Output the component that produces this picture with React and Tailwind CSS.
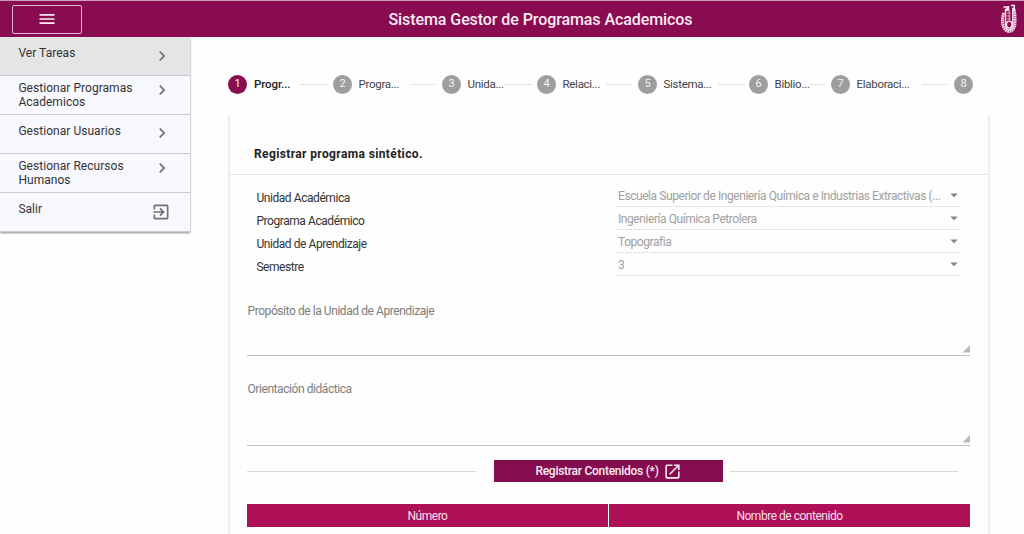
import React from 'react';
import { MdMenu, MdChevronRight, MdExitToApp, MdOpenInNew, MdArrowDropDown } from 'react-icons/md';

const menu = [
  { label: 'Ver Tareas', item: 'bg-[#e5e5e5] pt-[9px]', icon: '' },
  { label: 'Gestionar Programas Academicos', item: 'pt-[5px]', icon: '-mt-px' },
  { label: 'Gestionar Usuarios', item: 'pt-[9px]', icon: '-mt-px' },
  { label: 'Gestionar Recursos Humanos', item: 'pt-[5px]', icon: '-mt-px' },
  { label: 'Salir', item: 'pt-[9px]', icon: '-ml-px', exit: true },
];

const steps = [
  { label: 'Progr...', width: 'w-[105px]', text: 'w-[46px]', line: 'w-[27px]', active: true },
  { label: 'Progra...', width: 'w-[109px]', text: 'w-[52px]', line: 'w-[24px]' },
  { label: 'Unida...', width: 'w-[95px]', text: 'w-[37px]', line: 'w-[27px]' },
  { label: 'Relaci...', width: 'w-[101px]', text: 'w-[43px]', line: 'w-[26px]' },
  { label: 'Sistema...', width: 'w-[111px]', text: 'w-[54px]', line: 'w-[27px]' },
  { label: 'Biblio...', width: 'w-[82px]', text: 'w-[35px]', line: 'w-[15px]' },
  { label: 'Elaboraci...', width: 'w-[123px]', text: 'w-[65px]', line: 'w-[25px]' },
  { label: '', width: 'w-[20px]' },
];

const fields = [
  ['Unidad Académica', 'Escuela Superior de Ingeniería Química e Industrias Extractivas (...'],
  ['Programa Académico', 'Ingeniería Química Petrolera'],
  ['Unidad de Aprendizaje', 'Topografia'],
  ['Semestre', '3'],
];

function Crest() {
  return (
    <svg viewBox="0 0 18 30" className="h-[30px] w-[18px]" fill="none">
      <path d="M3.6 9C2.2 14 2 19 3.6 23c1.4 3 3.2 4.4 5.4 4.4 3.4 0 5.6-3.4 5.9-7.4.3-4 .2-10-1-15" stroke="#f7dcea" strokeWidth="3" strokeDasharray="1.7 .5" />
      <path d="M5.5 5v15c0 3.6 1.6 5.6 3.7 5.6s3.6-2 3.6-5.6V4" stroke="#f6dbe9" strokeWidth="1.5" />
      <path d="M3.4 3h3.2v4M8.4 2v5M11 1.5h3.2V7" stroke="#fbe6f1" strokeWidth="1.7" />
      <path d="M9.2 6v10M7 9h4M7 12h4M7 15h4" stroke="#dc96bb" strokeWidth="1.2" />
      <ellipse cx="9.2" cy="20.5" rx="2.7" ry="3.4" stroke="#fbe9f3" strokeWidth="1.3" />
    </svg>
  );
}

function TextArea({ label, className }) {
  return (
    <div className={`flex justify-between border-b border-[#bdbdbd] text-[12px] leading-4 tracking-[-0.43px] text-[#7d7d7d] ${className}`}>
      <span className="pl-[0.5px]">{label}</span>
      <svg viewBox="0 0 8 8" className="mb-[2px] h-2 w-2 self-end">
        <path d="M8 0v7.5H.5z" fill="#b9b9b9" />
      </svg>
    </div>
  );
}

export default function App() {
  return (
    <div className="h-[534px] w-[1024px] overflow-hidden bg-[#fefefe] font-[Roboto,sans-serif] text-[#333]">
      <header className="flex h-[37px] items-center border-t border-[#cf9db8] bg-[#8a0c50] pr-[6px] pl-3">
        <button className="flex h-[29px] w-[70px] items-center justify-center rounded-[2px] border border-[#e3b5cd] text-[#fbeaf3]">
          <MdMenu size={20} />
        </button>
        <h1 className="flex-1 pt-px pr-px text-center text-[16px] font-medium tracking-[-0.08px] text-[#fbe9f3]">
          Sistema Gestor de Programas Academicos
        </h1>
        <Crest />
      </header>

      <div className="flex">
        <nav className="h-[195px] w-[190px] shrink-0 bg-[#f8f8ff] shadow-[0_1px_2px_rgba(0,0,0,0.45)]">
          {menu.map((m) => (
            <div key={m.label} className={`flex h-[39px] items-start border-b border-[#c9c9cf] pl-[18px] text-[12px] leading-[14px] tracking-[0.04px] ${m.item}`}>
              <span className="w-[126px] pl-[0.4px]">{m.label}</span>
              <span className={`flex w-[35px] justify-center text-[#6f6f72] ${m.icon}`}>
                {m.exit ? <MdExitToApp size={20} /> : <MdChevronRight size={20} />}
              </span>
            </div>
          ))}
        </nav>

        <main className="pl-[38px]">
          <div className="mt-[37px] flex h-5 w-[746px]">
            {steps.map((s, i) => (
              <div key={i} className={`flex shrink-0 items-center ${s.width}`}>
                <span className={`flex h-[19px] w-[19px] shrink-0 items-center justify-center rounded-full pt-px text-[11px] text-[#f3f3f3] ${s.active ? 'bg-[#880e4f]' : 'bg-[#9e9e9e]'}`}>
                  {i + 1}
                </span>
                {s.label && (
                  <>
                    <span className={`shrink-0 pt-[2px] text-[11.5px] whitespace-nowrap ${s.active ? 'ml-[7px] font-medium tracking-[-0.1px] text-[#222]' : 'ml-[6.5px] tracking-[-0.28px] text-[#444]'} ${s.text}`}>
                      {s.label}
                    </span>
                    <span className={`h-px shrink-0 bg-[#dfdfdf] ${s.line}`} />
                  </>
                )}
              </div>
            ))}
          </div>

          <section className="mt-[21px] h-[419px] w-[762px] border-x-2 border-[#eeeeee]">
            <h2 className="flex h-[60px] items-center border-b border-[#dfdfdf] pt-[19px] pl-6 text-[12px] font-bold tracking-[0.38px] text-[#222]">
              Registrar programa sintético.
            </h2>
            <div className="mt-[11px] flex flex-col pr-[28px] pl-[26px]">
              {fields.map(([label, value]) => (
                <div key={label} className="flex h-[23px] items-start justify-between text-[12px] leading-[25px] tracking-[-0.43px]">
                  <span className="pl-[0.4px]">{label}</span>
                  <span className="flex h-[21px] w-[343px] items-start justify-between border-b border-dotted border-[#cfcfcf] leading-[21px] text-[#a0a0a0]">
                    <span className="pl-px whitespace-nowrap">{value}</span>
                    <MdArrowDropDown size={18} className="-mr-[3px] shrink-0 text-[#858585]" />
                  </span>
                </div>
              ))}
            </div>

            <div className="pr-[18px] pl-[17px]">
              <TextArea label="Propósito de la Unidad de Aprendizaje" className="mt-[25px] h-[53px]" />
              <TextArea label="Orientación didáctica" className="mt-[25px] h-[65px]" />
              <div className="mt-[14px] flex items-center">
                <span className="h-px w-[229px] bg-[#d9d9d9]" />
                <button className="mr-[7px] ml-[18px] flex h-[22px] w-[229px] items-center justify-center gap-1 bg-[#860c50] text-[12px] font-medium tracking-[-0.27px] text-[#fbeaf3]">
                  Registrar Contenidos (*)
                  <MdOpenInNew size={19} />
                </button>
                <span className="h-px w-[228px] bg-[#d9d9d9]" />
              </div>
              <div className="mt-[22px] flex h-[23px] gap-px text-[12px] tracking-[-0.48px] text-[#fbdfea]">
                <div className="flex w-[361px] items-center justify-center bg-[#ad1057]">Número</div>
                <div className="flex flex-1 items-center justify-center bg-[#ad1057]">Nombre de contenido</div>
              </div>
            </div>
          </section>
        </main>
      </div>
    </div>
  );
}
